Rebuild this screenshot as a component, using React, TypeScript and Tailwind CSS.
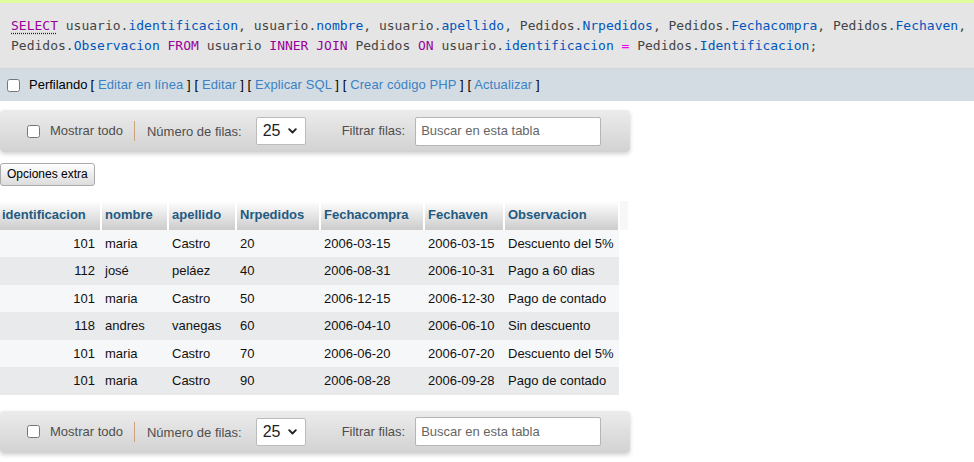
import React from "react";

const rows = [
  ["101", "maria", "Castro", "20", "2006-03-15", "2006-03-15", "Descuento del 5%"],
  ["112", "josé", "peláez", "40", "2006-08-31", "2006-10-31", "Pago a 60 dias"],
  ["101", "maria", "Castro", "50", "2006-12-15", "2006-12-30", "Pago de contado"],
  ["118", "andres", "vanegas", "60", "2006-04-10", "2006-06-10", "Sin descuento"],
  ["101", "maria", "Castro", "70", "2006-06-20", "2006-07-20", "Descuento del 5%"],
  ["101", "maria", "Castro", "90", "2006-08-28", "2006-09-28", "Pago de contado"],
];

const cols = [
  { name: "identificacion", w: "w-[101px]" },
  { name: "nombre", w: "w-[67px]" },
  { name: "apellido", w: "w-[68px]" },
  { name: "Nrpedidos", w: "w-[84px]" },
  { name: "Fechacompra", w: "w-[104px]" },
  { name: "Fechaven", w: "w-[80px]" },
  { name: "Observacion", w: "w-[115px]" },
];

function Chevron() {
  return (
    <svg width="9" height="6" viewBox="0 0 9 6" className="ml-auto">
      <path d="M1.2 1.2 L4.5 4.5 L7.8 1.2" fill="none" stroke="#222" strokeWidth="1.9" strokeLinecap="round" strokeLinejoin="round" />
    </svg>
  );
}

function NavBar() {
  return (
    <div className="w-[630px] h-[42px] rounded-[4px] bg-gradient-to-b from-[#ececec] to-[#d2d2d2] shadow-[0_2px_4px_rgba(0,0,0,0.18)] flex items-center text-[13px] text-[#4e4e4e]">
      <input type="checkbox" className="ml-[27px] w-[13px] h-[13px] m-0" />
      <span className="ml-[10px]">Mostrar todo</span>
      <div className="ml-[11px] w-px h-[20px] bg-[#c9a57c]" />
      <span className="ml-[12px] mt-[2px]">Número de filas:</span>
      <div className="ml-[14px] w-[50px] h-[28px] bg-white border border-[#bbb] rounded-[2px] flex items-center pl-[6px] pr-[8px] text-[16px] text-[#222]">
        25
        <Chevron />
      </div>
      <span className="ml-[36px]">Filtrar filas:</span>
      <div className="ml-[10px] w-[186px] h-[29px] bg-white border border-[#b5b5b5] rounded-[2px] flex items-center pl-[5px] text-[#666]">
        Buscar en esta tabla
      </div>
    </div>
  );
}

export default function App() {
  const mono = { fontFamily: "'DejaVu Sans Mono', monospace" };
  return (
    <div className="w-[974px] h-[462px] overflow-hidden bg-white" style={{ fontFamily: "'Liberation Sans', Arial, sans-serif" }}>
      <div className="h-[3px] bg-[#e1fb9f]" />
      <div className="bg-[#e5e5e5] h-[65px] pt-[13px] pl-[11px] text-[13px] leading-[19.5px] whitespace-nowrap overflow-hidden text-[#444]" style={mono}>
        <div>
          <span className="text-[#990099] underline decoration-dotted decoration-[#222] underline-offset-[3px]">SELECT</span>{" "}
          usuario.<span className="text-[#0055bb]">identificacion</span>, usuario.<span className="text-[#0055bb]">nombre</span>, usuario.<span className="text-[#0055bb]">apellido</span>, Pedidos.<span className="text-[#0055bb]">Nrpedidos</span>, Pedidos.<span className="text-[#0055bb]">Fechacompra</span>, Pedidos.<span className="text-[#0055bb]">Fechaven</span>,
        </div>
        <div>
          Pedidos.<span className="text-[#0055bb]">Observacion</span> <span className="text-[#990099]">FROM</span> usuario <span className="text-[#990099]">INNER JOIN</span> Pedidos <span className="text-[#990099]">ON</span> usuario.<span className="text-[#0055bb]">identificacion</span> <span className="text-[#ee00ee]">=</span> Pedidos.<span className="text-[#0055bb]">Identificacion</span>;
        </div>
      </div>
      <div className="h-px bg-[#cfd6dc]" />
      <div className="h-[32px] bg-[#d4dce3] flex items-center text-[13px] text-black">
        <input type="checkbox" className="ml-[7px] w-[13px] h-[13px] m-0" />
        <span className="ml-[9px]">Perfilando</span>
        <span className="ml-[3px] tracking-[0.1px]">[ <span className="text-[#3a82c4]">Editar en línea</span> ] [ <span className="text-[#3a82c4]">Editar</span> ] [ <span className="text-[#3a82c4]">Explicar SQL</span> ] [ <span className="text-[#3a82c4]">Crear código PHP</span> ] [ <span className="text-[#3a82c4]">Actualizar</span> ]</span>
      </div>
      <div className="mt-[9px]">
        <NavBar />
      </div>
      <div className="mt-[9px]">
        <div className="inline-flex items-center h-[23px] px-[6px] text-[12px] text-black border border-[#aaa] rounded-[3px] bg-gradient-to-b from-[#ffffff] to-[#dcdcdc]">
          Opciones extra
        </div>
      </div>
      <table className="mt-[15px] border-collapse text-[13px]">
        <thead>
          <tr className="h-[29px]">
            {cols.map((c, i) => (
              <th
                key={c.name}
                className={`${c.w} text-left font-bold text-[#235a81] bg-gradient-to-b from-[#ffffff] to-[#cccccc] border-r-2 border-white ${i === 0 ? "pl-[2px]" : "pl-[3px]"} p-0`}
              >
                {c.name}
              </th>
            ))}
            <th className="w-[9px] bg-[#f6f7f9] p-0" />
          </tr>
        </thead>
        <tbody>
          {rows.map((r, ri) => (
            <tr key={ri} className={`h-[27.5px] ${ri % 2 === 0 ? "bg-[#f6f7f9]" : "bg-[#e9eaec]"}`}>
              {r.map((v, ci) => (
                <td key={ci} className={`p-0 text-[#111] ${ci === 0 ? "text-right pr-[6px]" : "pl-[4px]"}`}>
                  {v}
                </td>
              ))}
              <td className="bg-white p-0" />
            </tr>
          ))}
        </tbody>
      </table>
      <div className="mt-[16px]">
        <NavBar />
      </div>
    </div>
  );
}
